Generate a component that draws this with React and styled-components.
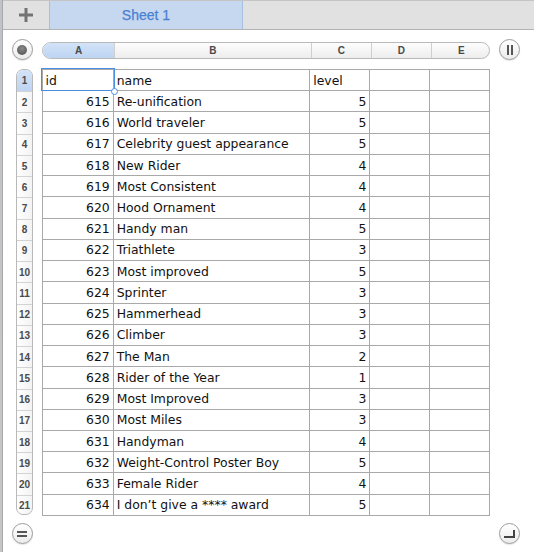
import styled, { createGlobalStyle } from 'styled-components'

const rows = [
  ['id', 'name', 'level'],
  [615, 'Re-unification', 5],
  [616, 'World traveler', 5],
  [617, 'Celebrity guest appearance', 5],
  [618, 'New Rider', 4],
  [619, 'Most Consistent', 4],
  [620, 'Hood Ornament', 4],
  [621, 'Handy man', 5],
  [622, 'Triathlete', 3],
  [623, 'Most improved', 5],
  [624, 'Sprinter', 3],
  [625, 'Hammerhead', 3],
  [626, 'Climber', 3],
  [627, 'The Man', 2],
  [628, 'Rider of the Year', 1],
  [629, 'Most Improved', 3],
  [630, 'Most Miles', 3],
  [631, 'Handyman', 4],
  [632, 'Weight-Control Poster Boy', 5],
  [633, 'Female Rider', 4],
  [634, 'I don\u2019t give a **** award', 5],
]

const columns = ['A', 'B', 'C', 'D', 'E']

const GlobalStyle = createGlobalStyle`
  html, body {
    margin: 0;
    padding: 0;
    background: #fff;
  }
  * {
    box-sizing: border-box;
  }
`

export default function App() {
  return (
    <>
      <GlobalStyle />
      <Page>
        <EdgeStrip />
        <Window>
          <TabBar>
            <AddTab>
              <svg width="16" height="16" viewBox="0 0 16 16">
                <path d="M8 1v14M1 8h14" stroke="#727272" strokeWidth="3" />
              </svg>
            </AddTab>
            <SheetTab>Sheet 1</SheetTab>
          </TabBar>
          <Body>
            <GutterCell>
              <RoundButton>
                <Dot />
              </RoundButton>
            </GutterCell>
            <HeaderCell>
              <ColumnHeader>
                {columns.map((c, i) => (
                  <ColLabel key={c} $col={i} $active={i === 0}>
                    {c}
                  </ColLabel>
                ))}
              </ColumnHeader>
            </HeaderCell>
            <SideCell>
              <RoundButton>
                <svg width="8" height="10" viewBox="0 0 8 10">
                  <path d="M2 0v10M6 0v10" stroke="#555" strokeWidth="2" />
                </svg>
              </RoundButton>
            </SideCell>

            <RowGutter>
              <RowHeaders>
                {rows.map((_, i) => (
                  <RowLabel key={i} $active={i === 0}>
                    {i + 1}
                  </RowLabel>
                ))}
              </RowHeaders>
            </RowGutter>
            <Sheet>
              {rows.map((r, ri) =>
                columns.map((_, ci) => {
                  const v = r[ci]
                  const numeric = typeof v === 'number'
                  return (
                    <Cell key={ri + '-' + ci} $numeric={numeric} $selected={ri === 0 && ci === 0}>
                      {v}
                      {ri === 0 && ci === 0 && <Handle />}
                    </Cell>
                  )
                })
              )}
            </Sheet>
            <div />

            <GutterCell>
              <RoundButton>
                <svg width="10" height="8" viewBox="0 0 10 8">
                  <path d="M0 2h10M0 6h10" stroke="#555" strokeWidth="2" />
                </svg>
              </RoundButton>
            </GutterCell>
            <div />
            <SideCell>
              <RoundButton>
                <svg width="12" height="10" viewBox="0 0 12 10">
                  <path d="M0 8h10V1" stroke="#444" strokeWidth="2" fill="none" />
                </svg>
              </RoundButton>
            </SideCell>
          </Body>
        </Window>
      </Page>
    </>
  )
}

const Page = styled.div`
  display: flex;
  width: 534px;
  height: 552px;
  overflow: hidden;
  background: #fff;
`
const EdgeStrip = styled.div`
  flex: 0 0 3px;
  background: linear-gradient(#bfc3c8, #c6c6c6);
  border-right: 1px solid #a8a8a8;
`
const Window = styled.div`
  flex: 1;
  display: flex;
  flex-direction: column;
`
const TabBar = styled.div`
  display: flex;
  height: 30px;
  background: #e1e1e1;
  border-top: 1px solid #c4c4c4;
  border-bottom: 1px solid #b3b3b3;
`
const AddTab = styled.div`
  display: flex;
  align-items: center;
  justify-content: center;
  width: 46px;
`
const SheetTab = styled.div`
  display: flex;
  align-items: center;
  justify-content: center;
  width: 194px;
  background: #c6d8ef;
  border-left: 1px solid #a6bee0;
  border-right: 1px solid #a6bee0;
  color: #4a80d2;
  font-family: 'Liberation Sans', Arial, sans-serif;
  font-size: 14px;
  -webkit-text-stroke: 0.25px #4a80d2;
  padding-bottom: 1px;
`
const Body = styled.div`
  display: grid;
  grid-template-columns: 38.5px 448px 1fr;
  grid-template-rows: 39px 446px 1fr;
  flex: 1;
`
const GutterCell = styled.div`
  display: flex;
  align-items: center;
  justify-content: center;
`
const SideCell = styled.div`
  display: flex;
  align-items: center;
  padding-left: 9.5px;
`
const HeaderCell = styled.div`
  display: flex;
  align-items: center;
  padding-top: 1px;
`
const RoundButton = styled.div`
  display: flex;
  align-items: center;
  justify-content: center;
  width: 21px;
  height: 21px;
  border-radius: 50%;
  border: 1px solid #9c9c9c;
  background: linear-gradient(#ffffff, #ececec);
  box-shadow: 0 1px 1px rgba(0, 0, 0, 0.12);
`
const Dot = styled.div`
  width: 10px;
  height: 10px;
  border-radius: 50%;
  background: radial-gradient(circle at 50% 35%, #8a8a8a, #4e4e4e);
`
const ColumnHeader = styled.div`
  display: grid;
  grid-template-columns: 71.2px 196.6px 60px 60px 60px;
  width: 448.5px;
  height: 17px;
  margin-left: 0.5px;
  border: 1px solid #b9b9b9;
  border-radius: 9px;
  overflow: hidden;
  background: linear-gradient(#fdfdfd, #ededed);
`
const ColLabel = styled.div`
  display: flex;
  align-items: center;
  justify-content: center;
  font-family: 'Liberation Sans', Arial, sans-serif;
  font-size: 10px;
  font-weight: bold;
  color: #4a4a4a;
  border-left: ${(p) => (p.$col === 0 ? 'none' : '1px solid #cfcfcf')};
  background: ${(p) => (p.$active ? 'linear-gradient(#d3e3f8, #bdd4f2)' : 'transparent')};
`
const RowGutter = styled.div`
  display: flex;
  justify-content: flex-end;
  padding-right: 8.5px;
`
const RowHeaders = styled.div`
  display: grid;
  grid-auto-rows: 21.24px;
  width: 17px;
  border: 1px solid #b9b9b9;
  border-radius: 7px;
  overflow: hidden;
  background: linear-gradient(90deg, #ffffff, #f3f3f3);
`
const RowLabel = styled.div`
  display: flex;
  align-items: center;
  justify-content: center;
  font-family: 'Liberation Sans', Arial, sans-serif;
  font-size: 10px;
  font-weight: bold;
  color: #4a4a4a;
  border-top: 1px solid #d3d3d3;
  &:first-child {
    border-top: none;
  }
  background: ${(p) => (p.$active ? 'linear-gradient(#d3e3f8, #bdd4f2)' : 'transparent')};
`
const Sheet = styled.div`
  display: grid;
  grid-template-columns: 71.2px 196.6px 60px 60px 60px;
  grid-auto-rows: 21.24px;
  border-top: 1px solid #a9a9a9;
  border-left: 1px solid #a9a9a9;
  align-self: start;
`
const Cell = styled.div`
  position: relative;
  display: flex;
  align-items: center;
  justify-content: ${(p) => (p.$numeric ? 'flex-end' : 'flex-start')};
  padding: 0 3px 0 3px;
  border-right: 1px solid #a9a9a9;
  border-bottom: 1px solid #a9a9a9;
  font-family: 'DejaVu Sans', Verdana, sans-serif;
  font-size: 12.4px;
  color: #111;
  white-space: nowrap;
  ${(p) =>
    p.$selected &&
    `
    &::after {
      content: '';
      position: absolute;
      inset: -2px -2px -1px -2px;
      border: 1px solid #4a8ee4;
      pointer-events: none;
    }
  `}
`
const Handle = styled.span`
  position: absolute;
  right: -5px;
  bottom: -5px;
  width: 7px;
  height: 7px;
  border-radius: 50%;
  border: 1px solid #4a8ee4;
  background: #fff;
  z-index: 1;
`
